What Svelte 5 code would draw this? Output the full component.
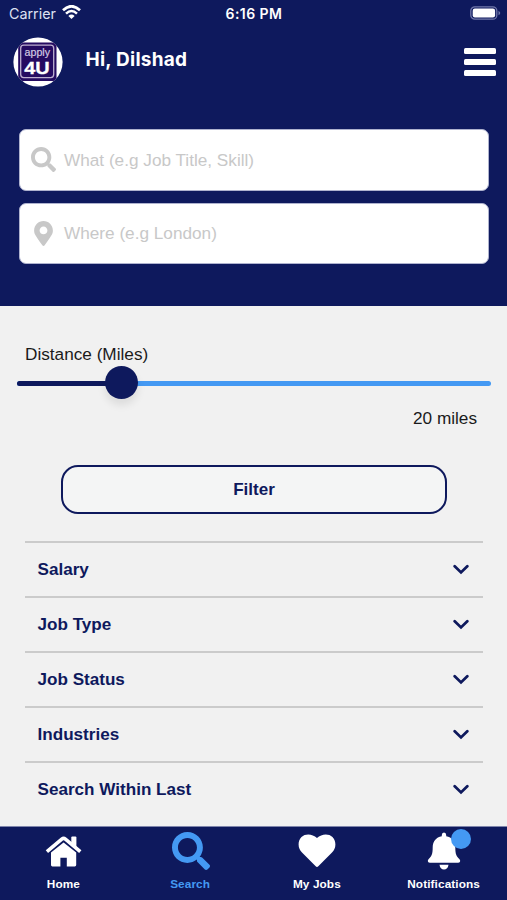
<script>
  const fields = [
    { icon: 'search', hint: 'What (e.g Job Title, Skill)' },
    { icon: 'pin', hint: 'Where (e.g London)' }
  ];
  const filters = ['Salary', 'Job Type', 'Job Status', 'Industries', 'Search Within Last'];
  const tabs = [
    { icon: 'home', label: 'Home' },
    { icon: 'search', label: 'Search', active: true },
    { icon: 'heart', label: 'My Jobs' },
    { icon: 'bell', label: 'Notifications', badge: true }
  ];
  const miles = 20;
</script>

{#snippet glass(size)}
  <svg width={size} height={size} viewBox="0 0 512 512" fill="currentColor">
    <path d="M505 442.7L405.3 343c-4.5-4.5-10.6-7-17-7H372c27.6-35.3 44-79.7 44-128C416 93.1 322.9 0 208 0S0 93.1 0 208s93.1 208 208 208c48.3 0 92.7-16.4 128-44v16.3c0 6.4 2.5 12.5 7 17l99.7 99.7c9.4 9.4 24.6 9.4 33.9 0l28.3-28.3c9.4-9.4 9.4-24.6.1-34zM208 336c-70.7 0-128-57.2-128-128 0-70.7 57.2-128 128-128 70.7 0 128 57.2 128 128 0 70.7-57.2 128-128 128z" />
  </svg>
{/snippet}

<div class="app">
  <header>
    <div class="status">
      <div class="carrier">
        <span>Carrier</span>
        <svg width="19" height="15" viewBox="0 0 19 15" fill="none" stroke="#fff">
          <path d="M1 5.3Q9.5-2.8 18 5.3" stroke-width="2.7" />
          <path d="M4 8.6Q9.5 3.4 15 8.6" stroke-width="2.5" />
          <path d="M6.4 10.9Q9.5 8.2 12.6 10.9L9.5 14Z" fill="#fff" stroke="none" />
        </svg>
      </div>
      <span class="time">6:16 PM</span>
      <svg class="battery" width="31" height="14" viewBox="0 0 31 14">
        <rect x=".8" y=".8" width="26" height="12.4" rx="4" fill="none" stroke="#7178aa" stroke-width="1.3" />
        <rect x="2.7" y="2.5" width="22.4" height="9" rx="2.2" fill="#fff" />
        <path d="M28.5 4.7Q32 7 28.5 9.3Z" fill="#7178aa" />
      </svg>
    </div>
    <div class="user">
      <svg class="logo" width="50" height="50" viewBox="0 0 50 50">
        <defs><clipPath id="disc"><circle cx="25" cy="25" r="24.6" /></clipPath></defs>
        <g clip-path="url(#disc)">
          <rect width="50" height="50" fill="#fff" />
          <rect x="5.2" y="5.5" width="38.3" height="38.5" fill="#250b61" />
          <rect x="7.7" y="8.2" width="33" height="32.4" rx="3" fill="none" stroke="#bdb0d0" stroke-width="1.3" />
        </g>
        <text x="24.3" y="19.2" class="apply" text-anchor="middle" textLength="25.5" lengthAdjust="spacingAndGlyphs">apply</text>
        <text x="24" y="37.4" class="four" text-anchor="middle" textLength="25.5" lengthAdjust="spacingAndGlyphs">4U</text>
      </svg>
      <h1>Hi, Dilshad</h1>
      <div class="menu"><i></i><i></i><i></i></div>
    </div>
    <div class="fields">
      {#each fields as f}
        <div class="field">
          <span class="ficon">
            {#if f.icon === 'search'}
              {@render glass(25)}
            {:else}
              <svg width="19" height="25" viewBox="0 0 384 512" fill="currentColor"><path d="M172.3 501.7C27 291 0 269.4 0 192 0 86 86 0 192 0s192 86 192 192c0 77.4-27 99-172.3 309.7-9.5 13.8-29.9 13.8-39.4 0zM192 272c44.2 0 80-35.8 80-80s-35.8-80-80-80-80 35.8-80 80 35.8 80 80 80z" /></svg>
            {/if}
          </span>
          <span class="hint">{f.hint}</span>
        </div>
      {/each}
    </div>
  </header>

  <main>
    <div class="label">Distance (Miles)</div>
    <div class="track"><div class="done" style:width="{miles * 1.1}%"></div><div class="thumb"></div></div>
    <div class="value">{miles} miles</div>
    <button>Filter</button>
    <div class="list">
      {#each filters as name}
        <div class="row">
          <span>{name}</span>
          <svg width="16" height="11" viewBox="0 0 16 11"><path d="M1.7 2.3L8 8.4L14.3 2.3" fill="none" stroke="#0e195d" stroke-width="2.8" stroke-linecap="round" /></svg>
        </div>
      {/each}
    </div>
  </main>

  <nav>
    {#each tabs as t}
      <div class="tab" class:active={t.active}>
        <div class="ticon">
          {#if t.icon === 'home'}
            <svg width="38" height="38" viewBox="0 0 38 38" fill="#fff">
              <path d="M7 20.5L19.6 10.4L32.2 20.5V33Q32.2 34.4 30.8 34.4H22.8V25.8H16.4V34.4H8.4Q7 34.4 7 33Z" />
              <path d="M2.9 19.6L17.8 7.1Q19.6 5.6 21.4 7.1L36.3 19.6" fill="none" stroke="#fff" stroke-width="3.6" />
              <path d="M27.3 5.5Q27.3 4.5 28.3 4.5H31.4Q32.4 4.5 32.4 5.5V16L27.3 12Z" />
            </svg>
          {:else if t.icon === 'search'}
            {@render glass(38)}
          {:else if t.icon === 'heart'}
            <svg width="38" height="38" viewBox="0 0 38 38" fill="#fff"><path d="M19 6C12.5-.3 .6 1.5.6 12.6Q.6 17 4 20.6L17.7 34.3Q19 35.6 20.3 34.3L34 20.6Q37.4 17 37.4 12.6C37.4 1.5 25.5-.3 19 6Z" /></svg>
          {:else}
            <svg width="38" height="38" viewBox="0 0 38 38" fill="#fff">
              <path d="M19 .5Q21.2 .5 21.2 3V4.3C27 5.3 30.3 9.5 30.3 15.3C30.3 22.5 31.5 24.2 34.3 27Q35.2 27.9 35.2 29Q35.2 30.7 33.2 30.7H4.8Q2.8 30.7 2.8 29Q2.8 27.9 3.7 27C6.5 24.2 7.7 22.5 7.7 15.3C7.7 9.5 11 5.3 16.8 4.3V3Q16.8 .5 19 .5Z" />
              <path d="M14.5 32.7H23.5Q22.8 37.5 19 37.5Q15.2 37.5 14.5 32.7Z" />
            </svg>
          {/if}
          {#if t.badge}<b class="badge"></b>{/if}
        </div>
        <span>{t.label}</span>
      </div>
    {/each}
  </nav>
</div>

<style>
  .app { width: 507px; height: 900px; display: flex; flex-direction: column; overflow: hidden; background: #f1f1f1; font-family: "Liberation Sans", Arial, sans-serif; }
  svg { display: block; flex: none; }
  header { height: 306px; background: #0e195d; color: #fff; flex: none; box-sizing: border-box; }
  .status { height: 28px; display: grid; grid-template-columns: 1fr auto 1fr; align-items: center; padding: 0 6px 0 9px; font: 15px/28px Inter, sans-serif; }
  .carrier { display: flex; align-items: center; gap: 6px; color: #dde0f2; font-size: 14.3px; }
  .carrier svg { margin-top: -3px; }
  .time { font-weight: 600; font-size: 14px; letter-spacing: .45px; margin-right: 2px; }
  .battery { justify-self: end; margin-top: -2px; }
  .user { height: 68px; display: flex; align-items: center; padding: 0 11px 0 13px; }
  .apply { font: 10.5px "Liberation Sans", sans-serif; fill: #d3c8e2; stroke: #d3c8e2; stroke-width: .2; }
  .four { font: bold 17px "Liberation Sans", sans-serif; fill: #fff; stroke: #fff; stroke-width: .3; }
  h1 { margin: -4px 0 0 22.5px; font: 700 19px/24px Inter, sans-serif; letter-spacing: .25px; white-space: nowrap; }
  .menu { margin-left: auto; display: flex; flex-direction: column; gap: 5.4px; }
  .menu i { display: block; width: 32.5px; height: 6px; border-radius: 1.5px; background: #fff; }
  .fields { padding: 33px 18px 0 19px; display: flex; flex-direction: column; gap: 12px; }
  .field { height: 61.5px; box-sizing: border-box; border: 1px solid #aeb2ce; border-radius: 7px; background: #fff; color: #c8c8c8; display: flex; align-items: center; font-size: 17.2px; }
  .hint { padding-top: 1px; }
  .ficon { width: 25px; margin: 0 8px 0 11px; display: flex; justify-content: center; }
  main { flex: 1; min-height: 0; color: #1a1a1a; font-size: 17.2px; }
  .label { padding: 38px 0 0 25px; line-height: 20px; }
  .track { position: relative; margin: 17px 16px 0 17px; height: 5px; border-radius: 3px; background: #4499f3; }
  .done { height: 5px; border-radius: 3px; background: #0e195d; }
  .thumb { position: absolute; left: 87.5px; top: -15.3px; width: 33px; height: 33px; border-radius: 50%; background: #0e195d; box-shadow: 0 6px 8px rgba(0, 0, 0, .09); }
  .value { padding: 22px 30px 0 0; line-height: 20px; text-align: right; }
  button { display: block; margin: 37px 0 0 61px; width: 386px; height: 49px; border: 2px solid #0e195d; border-radius: 17px; background: #f4f5f5; color: #0e195d; font: bold 17px "Liberation Sans", sans-serif; padding: 1px 0 0; }
  .list { margin: 27px 24px 0 25px; }
  .row { height: 55px; box-sizing: border-box; border-top: 2px solid #cbcbcb; padding: 0 14px 0 12.5px; display: flex; align-items: center; justify-content: space-between; color: #0e195d; font-size: 17.1px; font-weight: bold; }
  nav { flex: none; height: 74px; box-sizing: border-box; border-top: 1px solid #7f85ac; background: #0e195d; color: #fff; display: grid; grid-template-columns: repeat(4, 1fr); font: bold 11.8px/16px "Liberation Sans", sans-serif; letter-spacing: .1px; }
  .tab { display: flex; flex-direction: column; align-items: center; padding-top: 5px; gap: 6px; }
  .active { color: #4499f3; }
  .active .ticon { margin: 0 -1px 0 1px; }
  .ticon { position: relative; }
  .badge { position: absolute; left: 26.5px; top: -3px; width: 20px; height: 20px; border-radius: 50%; background: #4499f3; }
</style>
